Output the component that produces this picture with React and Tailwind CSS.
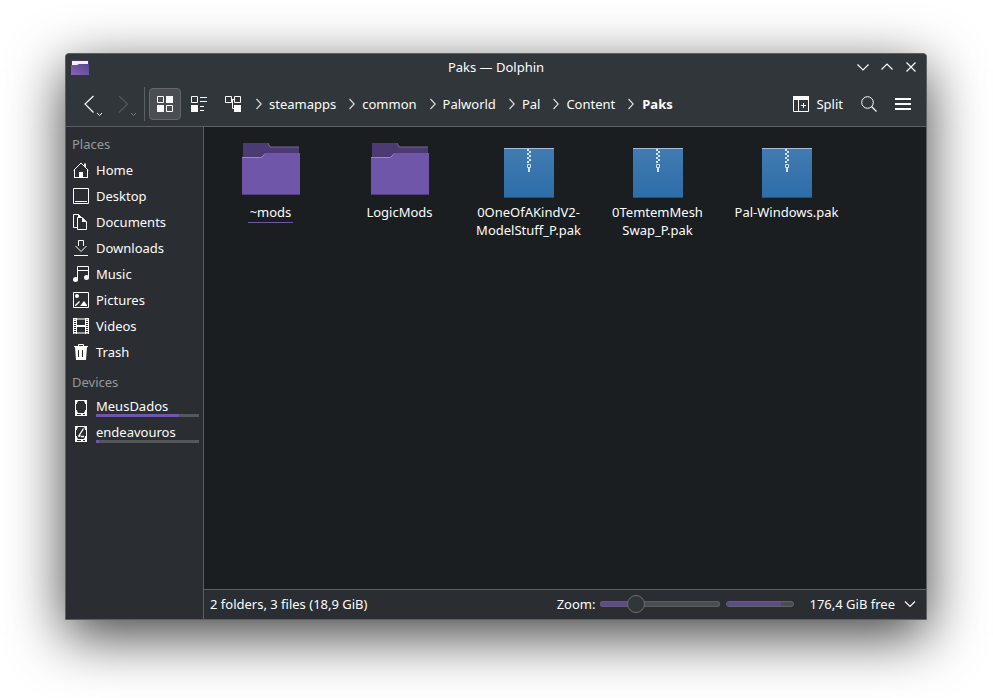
import clsx from 'clsx'

function Icon({ size = 16, children, className }) {
  return (
    <svg
      width={size}
      height={size}
      viewBox={`0 0 ${size} ${size}`}
      fill="none"
      aria-hidden="true"
      className={clsx('shrink-0', className)}
    >
      {children}
    </svg>
  )
}

function HomeIcon() {
  return (
    <Icon>
      <path d="M.7 8.300 8 1l7.300 7.300" stroke="#fcfcfc" />
      <path d="M11 1.500h2v4l-2-2zM1 8h1v7h4v-5h4v5h4V8h1v8H1z" fill="#fcfcfc" />
    </Icon>
  )
}

function DesktopIcon() {
  return (
    <Icon>
      <path d="M.5.5h15v15H.5zM2 13.500h12" stroke="#fcfcfc" />
    </Icon>
  )
}

function DocumentsIcon() {
  return (
    <Icon>
      <path d="M4 13.500H.5V.5h5l3 3M4.500 3.500v12h9V8L9 3.500z" stroke="#fcfcfc" />
      <path d="M5 0l4 4H5zM9 3l5 5H9z" fill="#fcfcfc" />
    </Icon>
  )
}

function DownloadsIcon() {
  return (
    <Icon>
      <path d="M5.500 6V.5h5V6M2.500 6l5.500 5.500L13.500 6M1 15.500h14" stroke="#fcfcfc" />
    </Icon>
  )
}

function MusicIcon() {
  return (
    <Icon>
      <path d="M4.500 13V.5h11v11M5 4.500h10" stroke="#fcfcfc" />
      <circle cx="2.500" cy="13.500" r="2.500" fill="#fcfcfc" />
      <circle cx="13.500" cy="11.500" r="2.500" fill="#fcfcfc" />
    </Icon>
  )
}

function PicturesIcon() {
  return (
    <Icon>
      <path d="M.5.5h15v15H.5z" stroke="#fcfcfc" />
      <circle cx="4" cy="4" r="2" fill="#fcfcfc" />
      <path d="M2 14v-1l4-4 1 1-4 4zM7 14l4-5 3 4v1z" fill="#fcfcfc" />
    </Icon>
  )
}

function VideosIcon() {
  return (
    <Icon>
      <path d="M0 0h16v2H0zM0 14h16v2H0z" fill="#9a9c9d" />
      <path d="M3 0h1v16H3zM12 0h1v16h-1zM4 7h8v2H4z" fill="#fcfcfc" />
      <path d="M.5 0v16M15.500 0v16" stroke="#fcfcfc" />
      <path d="M2 0v16M14 0v16" stroke="#fcfcfc" strokeWidth="2" strokeDasharray="1 1" />
    </Icon>
  )
}

function TrashIcon() {
  return (
    <Icon>
      <path d="M5.500 2V.5h5V2" stroke="#fcfcfc" />
      <path d="M1 2h14v1H1z" fill="#fcfcfc" />
      <path fillRule="evenodd" d="M2 3h12l-1 13H3zM5 6v7h1V6zM9 6v7h1V6z" fill="#fcfcfc" />
    </Icon>
  )
}

function DriveIcon({ root }) {
  return (
    <Icon>
      <path fillRule="evenodd" d="M2 0h12v16H2zM5 1L4 3v8l1 2h6l1-2V3l-1-2z" fill="#fcfcfc" />
      <path d="M3 4h1v6H3zM12 4h1v6h-1zM4 14h4v1H4zM10 14h2v1h-2z" fill="#2a2e32" />
      {root && <path d="M10.500 2.500l-5 8M5.500 10.500l2-1M8 10.500h3" stroke="#fcfcfc" strokeWidth="1.400" />}
    </Icon>
  )
}

function Chevron() {
  return (
    <svg width="6" height="12" viewBox="0 0 6 12" fill="none" aria-hidden="true">
      <path d="M.5 1l4.700 5L.5 11" stroke="#d8d9da" strokeWidth="1.200" />
    </svg>
  )
}

function FolderIcon() {
  return (
    <Icon size={64}>
      <path d="M4 4h25l3 4h28v16H4z" fill="#4c3a73" />
      <path d="M29 4l2 4h29" stroke="#776694" />
      <path d="M3 18h19l4-4h35v42H3z" fill="#6f56a8" />
      <path d="M3 18.500h19.500l3-3" stroke="#9a88c2" />
      <path d="M3 55h58v1H3z" fill="#533f80" />
    </Icon>
  )
}

function ArchiveIcon() {
  return (
    <Icon size={64}>
      <defs>
        <linearGradient id="archive" x1="0" y1="0" x2="0" y2="1">
          <stop offset="0" stopColor="#427bb1" />
          <stop offset="1" stopColor="#2d6da9" />
        </linearGradient>
      </defs>
      <path d="M7 9h50v50H7z" fill="url(#archive)" />
      <path d="M7 9h50v1H7z" fill="#a3c0da" />
      <path d="M7 58h50v1H7z" fill="#20517f" />
      <path
        d="M30 10h2v2h-2zM32 12h2v2h-2zM30 14h2v2h-2zM32 16h2v2h-2zM30 18h2v2h-2zM32 20h2v2h-2zM30 22h2v2h-2zM31 29h2v4h-2z"
        fill="#d5e2ee"
      />
      <path d="M30.500 25.500h3v3h-3z" stroke="#d5e2ee" />
    </Icon>
  )
}

const places = [
  { name: 'Home', icon: <HomeIcon /> },
  { name: 'Desktop', icon: <DesktopIcon /> },
  { name: 'Documents', icon: <DocumentsIcon /> },
  { name: 'Downloads', icon: <DownloadsIcon /> },
  { name: 'Music', icon: <MusicIcon /> },
  { name: 'Pictures', icon: <PicturesIcon /> },
  { name: 'Videos', icon: <VideosIcon /> },
  { name: 'Trash', icon: <TrashIcon /> },
]

const devices = [
  { name: 'MeusDados', used: 81, icon: <DriveIcon /> },
  { name: 'endeavouros', used: 3, icon: <DriveIcon root /> },
]

const path = ['steamapps', 'common', 'Palworld', 'Pal', 'Content', 'Paks']

// each name is split where it may wrap
const files = [
  { parts: ['~mods'], folder: true, current: true },
  { parts: ['LogicMods'], folder: true },
  { parts: ['0OneOfAKindV2-', 'ModelStuff_P.pak'] },
  { parts: ['0TemtemMesh', 'Swap_P.pak'] },
  { parts: ['Pal-Windows.pak'] },
]

function TitleBar() {
  return (
    <div className="grid h-[26px] grid-cols-3 items-center px-1">
      <svg width="20" height="16" viewBox="0 0 20 16" aria-hidden="true">
        <defs>
          <linearGradient id="app" x1="0" y1="1" x2="1" y2="0">
            <stop offset="0" stopColor="#8a63b8" />
            <stop offset="1" stopColor="#51468a" />
          </linearGradient>
        </defs>
        <path d="M1 0h8l1 1h9v6H1z" fill="#463769" />
        <path d="M2 2h16v5H2z" fill="#f4f2f6" />
        <path d="M1 6h6l2-1h10v11H1z" fill="url(#app)" />
      </svg>
      <h1 className="text-center">Paks — Dolphin</h1>
      <div className="flex justify-end gap-2 pr-[3px]">
        <button aria-label="Minimize">
          <Icon><path d="M2.500 5.500L8 11l5.500-5.500" stroke="#fcfcfc" strokeWidth="1.200" /></Icon>
        </button>
        <button aria-label="Maximize">
          <Icon><path d="M2.500 10.500L8 5l5.500 5.500" stroke="#fcfcfc" strokeWidth="1.200" /></Icon>
        </button>
        <button aria-label="Close">
          <Icon><path d="M3.500 3.500l9 9M12.500 3.500l-9 9" stroke="#fcfcfc" strokeWidth="1.200" /></Icon>
        </button>
      </div>
    </div>
  )
}

function ToolBar() {
  return (
    <div className="flex h-11 items-center pr-2">
      <button aria-label="Back" className="ml-4">
        <svg width="24" height="24" viewBox="0 0 24 24" fill="none">
          <path d="M11.500 4L3 12l8.500 8.500" stroke="#fcfcfc" strokeWidth="1.200" />
          <path d="M15 21l2.500 2.500L20 21" stroke="#fcfcfc" />
        </svg>
      </button>
      <button aria-label="Forward" disabled className="ml-2">
        <svg width="24" height="24" viewBox="0 0 24 24" fill="none">
          <path d="M5 4l8.500 8L5 20.500" stroke="#54585c" strokeWidth="1.200" />
          <path d="M17 21l2.500 2.500L22 21" stroke="#777a7d" />
        </svg>
      </button>
      <div className="ml-1.5 h-[34px] w-px bg-[#5c6064]" />
      <div className="ml-1 flex gap-0.5">
        <button aria-label="Icons" aria-pressed="true" className="flex size-8 items-center justify-center rounded-sm border border-[#65686b] bg-[#4a4e52]">
          <Icon>
            <path d="M.5.5h6v6h-6zM9.500 9.500h6v6h-6z" stroke="#fcfcfc" />
            <path d="M9 0h7v7H9zM0 9h7v7H0z" fill="#fcfcfc" />
          </Icon>
        </button>
        <button aria-label="Compact" className="flex size-8 items-center justify-center">
          <Icon>
            <path d="M.5.5h6v6h-6zM9 1.500h7M9 5.500h7M9 10.500h4M9 14.500h4" stroke="#fcfcfc" />
            <path d="M0 9h7v7H0z" fill="#fcfcfc" />
          </Icon>
        </button>
        <button aria-label="Details" className="flex size-8 items-center justify-center">
          <Icon>
            <path d="M.5.5h6v6h-6zM9.500.5h6v6h-6zM7 3.500h2M7.500 3.500v9h2" stroke="#fcfcfc" />
            <path d="M9 9h7v7H9z" fill="#fcfcfc" />
          </Icon>
        </button>
      </div>
      <nav className="ml-[7px] flex flex-1 items-center gap-[13px]">
        {path.map((dir, i) => (
          <div key={dir} className="flex items-center">
            <Chevron />
            <a href="#" className={i === path.length - 1 ? 'ml-2 font-bold' : 'ml-[7px]'}>{dir}</a>
          </div>
        ))}
      </nav>
      <button className="flex items-center gap-[7px]">
        <Icon>
          <path d="M.5.5h15v15H.5zM5.500 3v13M10.500 7v5M8 9.500h5" stroke="#fcfcfc" />
          <path d="M0 0h16v4H0z" fill="#fcfcfc" />
        </Icon>
        Split
      </button>
      <button aria-label="Search" className="ml-4 flex size-5 items-center justify-center">
        <Icon>
          <circle cx="6.500" cy="6.500" r="5.800" stroke="#fcfcfc" />
          <path d="M10.500 10.500l5 5" stroke="#fcfcfc" strokeWidth="1.200" />
        </Icon>
      </button>
      <button aria-label="Menu" className="mr-[7px] ml-4">
        <Icon><path d="M0 2h16v2H0zM0 7h16v2H0zM0 12h16v2H0z" fill="#fcfcfc" /></Icon>
      </button>
    </div>
  )
}

function Places() {
  return (
    <aside className="w-[138px] shrink-0 border-r border-[#5c6064] bg-[#2a2e32] pt-1">
      <h2 className="h-[26px] px-1.5 leading-[26px] text-[#96999b]">Places</h2>
      <ul>
        {places.map((p) => (
          <li key={p.name}>
            <a href="#" className="flex h-[26px] items-center gap-[7px] px-[7px]">
              {p.icon}
              {p.name}
            </a>
          </li>
        ))}
      </ul>
      <h2 className="mt-1 h-[26px] px-1.5 leading-[26px] text-[#96999b]">Devices</h2>
      <ul>
        {devices.map((d) => (
          <li key={d.name}>
            <a href="#" className="flex h-[26px] items-center gap-[7px] pr-1 pl-[7px]">
              {d.icon}
              <span className="flex-1 pb-0.5">
                <span className="block leading-4">{d.name}</span>
                <span className="block h-[3px] bg-[#54585b]">
                  <span className="block h-full bg-[#6f56a8]" style={{ width: `${d.used}%` }} />
                </span>
              </span>
            </a>
          </li>
        ))}
      </ul>
    </aside>
  )
}

function FileItem({ file }) {
  return (
    <a href="#" className="flex flex-col items-center">
      {file.folder ? <FolderIcon /> : <ArchiveIcon />}
      <span
        className={clsx(
          'max-w-28 px-0.5 text-center leading-[18px]',
          file.current && 'border-b border-[#6f56a8] pb-px'
        )}
      >
        {file.parts.map((part) => (
          <span key={part}>{part}<wbr /></span>
        ))}
      </span>
    </a>
  )
}

function StatusBar() {
  return (
    <footer className="flex h-[30px] items-center border-t border-[#5c6064] bg-[#2a2e32] px-1.5 pb-0.5">
      <span className="flex-1">2 folders, 3 files (18,9 GiB)</span>
      <label htmlFor="zoom">Zoom:</label>
      <input
        id="zoom"
        type="range"
        min="0"
        max="100"
        defaultValue="26"
        className="ml-[5px] h-[18px] w-[120px] appearance-none bg-transparent [&::-webkit-slider-runnable-track]:h-1.5 [&::-webkit-slider-runnable-track]:rounded-full [&::-webkit-slider-runnable-track]:bg-linear-to-r [&::-webkit-slider-runnable-track]:from-[#5d4b8a] [&::-webkit-slider-runnable-track]:from-30% [&::-webkit-slider-runnable-track]:to-[#4a4e50] [&::-webkit-slider-runnable-track]:to-30% [&::-webkit-slider-runnable-track]:inset-ring [&::-webkit-slider-runnable-track]:inset-ring-[#65686b]/60 [&::-webkit-slider-thumb]:-mt-1.5 [&::-webkit-slider-thumb]:size-[18px] [&::-webkit-slider-thumb]:appearance-none [&::-webkit-slider-thumb]:rounded-full [&::-webkit-slider-thumb]:border [&::-webkit-slider-thumb]:border-[#6b6e71] [&::-webkit-slider-thumb]:bg-[#31363b]"
      />
      <div className="ml-1.5 h-1.5 w-[68px] overflow-hidden rounded-full border border-[#606467] bg-[#4a4e50]">
        <div className="h-full bg-[#5d4b8a]" style={{ width: '81%' }} />
      </div>
      <button className="ml-[15px] flex items-center gap-[7px]">
        176,4 GiB free
        <Icon className="mr-0.5"><path d="M3 5.500l5 5 5-5" stroke="#fcfcfc" strokeWidth="1.200" /></Icon>
      </button>
    </footer>
  )
}

export default function App() {
  return (
    <div className="flex min-h-screen bg-white pt-[53px] pr-[66px] pb-[78px] pl-[65px] font-['Noto_Sans',sans-serif] text-[13px] leading-[18px] text-[#fcfcfc]">
      <div className="flex min-w-0 flex-1 flex-col overflow-hidden rounded-t-sm border border-[#5c6064] bg-[#1b1e20] shadow-[0_16px_56px_rgba(0,0,0,0.75)]">
        <header className="flex flex-col gap-0.5 border-b border-[#5c6064] bg-[#31363b]">
          <TitleBar />
          <ToolBar />
        </header>
        <div className="flex flex-1">
          <Places />
          <div className="flex min-w-0 flex-1 flex-col">
            <main className="grid flex-1 grid-cols-[repeat(auto-fill,129px)] content-start px-0.5 pt-3">
              {files.map((f) => (
                <FileItem key={f.parts[0]} file={f} />
              ))}
            </main>
            <StatusBar />
          </div>
        </div>
      </div>
    </div>
  )
}
